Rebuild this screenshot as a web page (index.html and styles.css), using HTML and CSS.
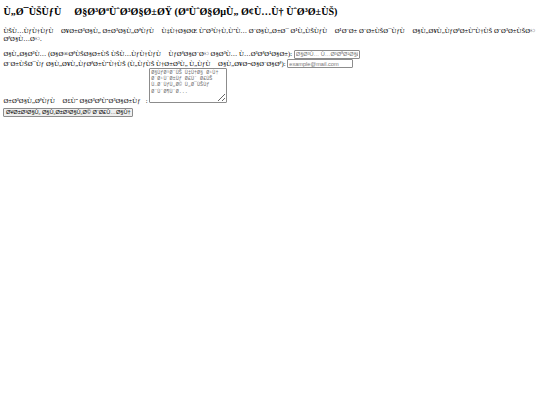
FILE: index.html
```html
<!DOCTYPE html>
<html>
<head>
<meta charset="utf-8">
<title>contact</title>
<link rel="stylesheet" href="styles.css">
</head>
<body class="page">
<h1 class="title">Ù„Ø¯ÙŠÙƒÙ&#x90;&nbsp; Ø§Ø³ØªÙˆØ³Ø§Ø±ØŸ (ØªÙˆØ§ØµÙ„ Ø¢Ù…Ù† ÙˆØ³Ø±ÙŠ)</h1>
<p class="intro">ÙŠÙ…ÙƒÙ†ÙƒÙ&#x90; Ø¥Ø±Ø³Ø§Ù„ Ø±Ø³Ø§Ù„ØªÙƒÙ&#x90; Ù‡Ù†Ø§ØŒ ÙˆØ³Ù†Ù‚ÙˆÙ… Ø¨Ø§Ù„Ø±Ø¯ Ø¹Ù„ÙŠÙƒÙ&#x90; Ø¹Ø¨Ø± Ø¨Ø±ÙŠØ¯ÙƒÙ&#x90; Ø§Ù„Ø¥Ù„ÙƒØªØ±ÙˆÙ†ÙŠ Ø¨Ø³Ø±ÙŠØ© ØªØ§Ù…Ø©.</p>
<form class="form">
<label class="lbl">Ø§Ù„Ø§Ø³Ù… (Ø§Ø®ØªÙŠØ§Ø±ÙŠ ÙŠÙ…ÙƒÙ†ÙƒÙ&#x90; ÙƒØªØ§Ø¨Ø© Ø§Ø³Ù… Ù…Ø³ØªØ¹Ø§Ø±):</label> <input class="field" type="text" placeholder="Ø§Ø³Ù… Ù…Ø³ØªØ¹Ø§Ø± Ø£Ùˆ Ø§ØªØ±ÙƒÙŠÙ‡ ÙØ§Ø±ØºØ§Ù‹"><br>
<label class="lbl">Ø¨Ø±ÙŠØ¯Ùƒ Ø§Ù„Ø¥Ù„ÙƒØªØ±ÙˆÙ†ÙŠ (Ù„ÙƒÙŠ Ù†Ø±Ø³Ù„ Ù„ÙƒÙ&#x90; Ø§Ù„Ø¥Ø¬Ø§Ø¨Ø§Øª):</label> <input class="field" type="email" placeholder="example@mail.com"><br>
<label class="lbl">Ø±Ø³Ø§Ù„ØªÙƒÙ&#x90; Ø£Ùˆ Ø§Ø³ØªÙˆØ³Ø§Ø±Ùƒ&nbsp;&nbsp; :</label> <textarea class="msg" rows="5" placeholder="Ø§ÙƒØªØ¨ÙŠ Ù‡Ù†Ø§ Ø¹Ù†&#10;Ø´Ø¹ÙˆØ±Ùƒ Ø£Ùˆ Ø£ÙŠ&#10;Ù…Ø´ÙƒÙ„Ø© Ù„Ø¯ÙŠÙƒ&#10;Ø¨ÙˆØ¶ÙˆØ­..."></textarea><br>
<button class="send" type="submit">Ø¥Ø±Ø³Ø§Ù„ Ø§Ù„Ø±Ø³Ø§Ù„Ø© Ø¨Ø£Ù…Ø§Ù†</button>
</form>
</body>
</html>
```
FILE: styles.css
```css
html {
  background: #fff;
}
.page {
  margin: 0 3.375px;
  font-family: "Liberation Serif", serif;
  font-size: 6.75px;
  color: #000;
}
.title {
  font-size: 10.125px;
  font-weight: bold;
  margin: 5.27px 0 8.23px;
}
.intro {
  margin: 0 0 6.75px;
}
.form {
  margin: 0;
}
.field {
  box-sizing: border-box;
  width: 66.2px;
  height: 9px;
  margin: 0;
  padding: 0 1px;
  border: 1px solid #8c8c8c;
  border-radius: 1px;
  background: #fff;
  font-family: "Liberation Sans", Arial, sans-serif;
  font-size: 5.625px;
  vertical-align: baseline;
}
.field::placeholder {
  color: #757575;
}
.msg {
  box-sizing: border-box;
  width: 78px;
  height: 35px;
  margin: 0;
  padding: 1px 0 1px 1px;
  border: 1px solid #8c8c8c;
  border-radius: 1px;
  background: #fff;
  font-family: "Liberation Mono", monospace;
  font-size: 5.1px;
  line-height: 1.2;
}
.msg::placeholder {
  color: #757575;
}
.send {
  box-sizing: border-box;
  height: 9px;
  margin: 3px 0 0;
  padding: 0 1.5px;
  border: 1px solid #8c8c8c;
  border-radius: 1px;
  background: #efefef;
  color: #000;
  font-family: "Liberation Sans", Arial, sans-serif;
  font-size: 5.625px;
  line-height: 1;
}
```
